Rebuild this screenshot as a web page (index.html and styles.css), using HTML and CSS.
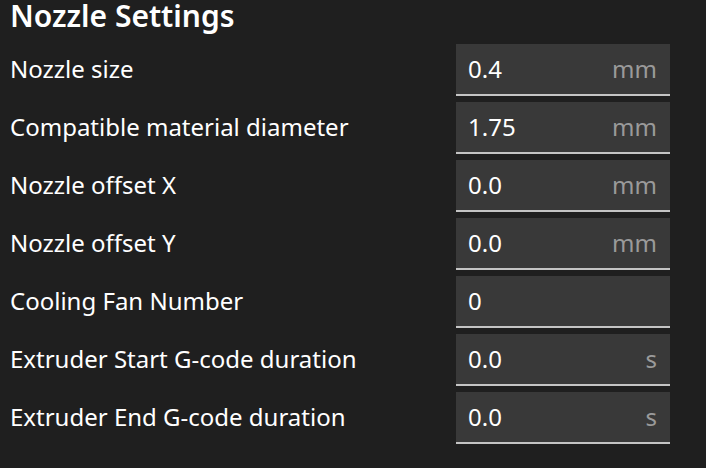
FILE: index.html
```html
<!DOCTYPE html>
<html>
<head>
<meta charset="utf-8">
<link rel="stylesheet" href="styles.css">
</head>
<body>
<div class="panel">
  <h1 class="title">Nozzle Settings</h1>
  <div class="rows">
    <div class="row"><span class="label">Nozzle size</span><div class="field"><span class="value">0.4</span><span class="unit">mm</span></div></div>
    <div class="row"><span class="label">Compatible material diameter</span><div class="field"><span class="value">1.75</span><span class="unit">mm</span></div></div>
    <div class="row"><span class="label">Nozzle offset X</span><div class="field"><span class="value">0.0</span><span class="unit">mm</span></div></div>
    <div class="row"><span class="label">Nozzle offset Y</span><div class="field"><span class="value">0.0</span><span class="unit">mm</span></div></div>
    <div class="row"><span class="label">Cooling Fan Number</span><div class="field"><span class="value">0</span><span class="unit"></span></div></div>
    <div class="row"><span class="label">Extruder Start G-code duration</span><div class="field"><span class="value">0.0</span><span class="unit">s</span></div></div>
    <div class="row"><span class="label">Extruder End G-code duration</span><div class="field"><span class="value">0.0</span><span class="unit">s</span></div></div>
  </div>
</div>
</body>
</html>
```
FILE: styles.css
```css
html, body {
  margin: 0;
  padding: 0;
  background: #1f1f1f;
}
body {
  font-family: "Noto Sans", "Open Sans", sans-serif;
  color: #ffffff;
  width: 706px;
  height: 468px;
  overflow: hidden;
}
.panel {
  padding: 0 36px 0 10px;
}
.title {
  margin: 0;
  font-size: 30px;
  font-weight: 600;
  line-height: 32px;
  height: 38px;
}
.rows {
  display: flex;
  flex-direction: column;
  gap: 6px;
  padding-top: 6px;
}
.row {
  display: flex;
  align-items: center;
  justify-content: space-between;
  height: 52px;
}
.label {
  font-size: 24px;
  color: #ffffff;
  padding-bottom: 4px;
}
.field {
  box-sizing: border-box;
  width: 214px;
  height: 52px;
  background: #393939;
  border-bottom: 2px solid #c4c4c4;
  display: flex;
  align-items: center;
  justify-content: space-between;
  padding: 0 13px 2px 12px;
}
.value {
  font-size: 24px;
  color: #ffffff;
}
.unit {
  font-size: 24px;
  color: #9a9a9a;
}
```
